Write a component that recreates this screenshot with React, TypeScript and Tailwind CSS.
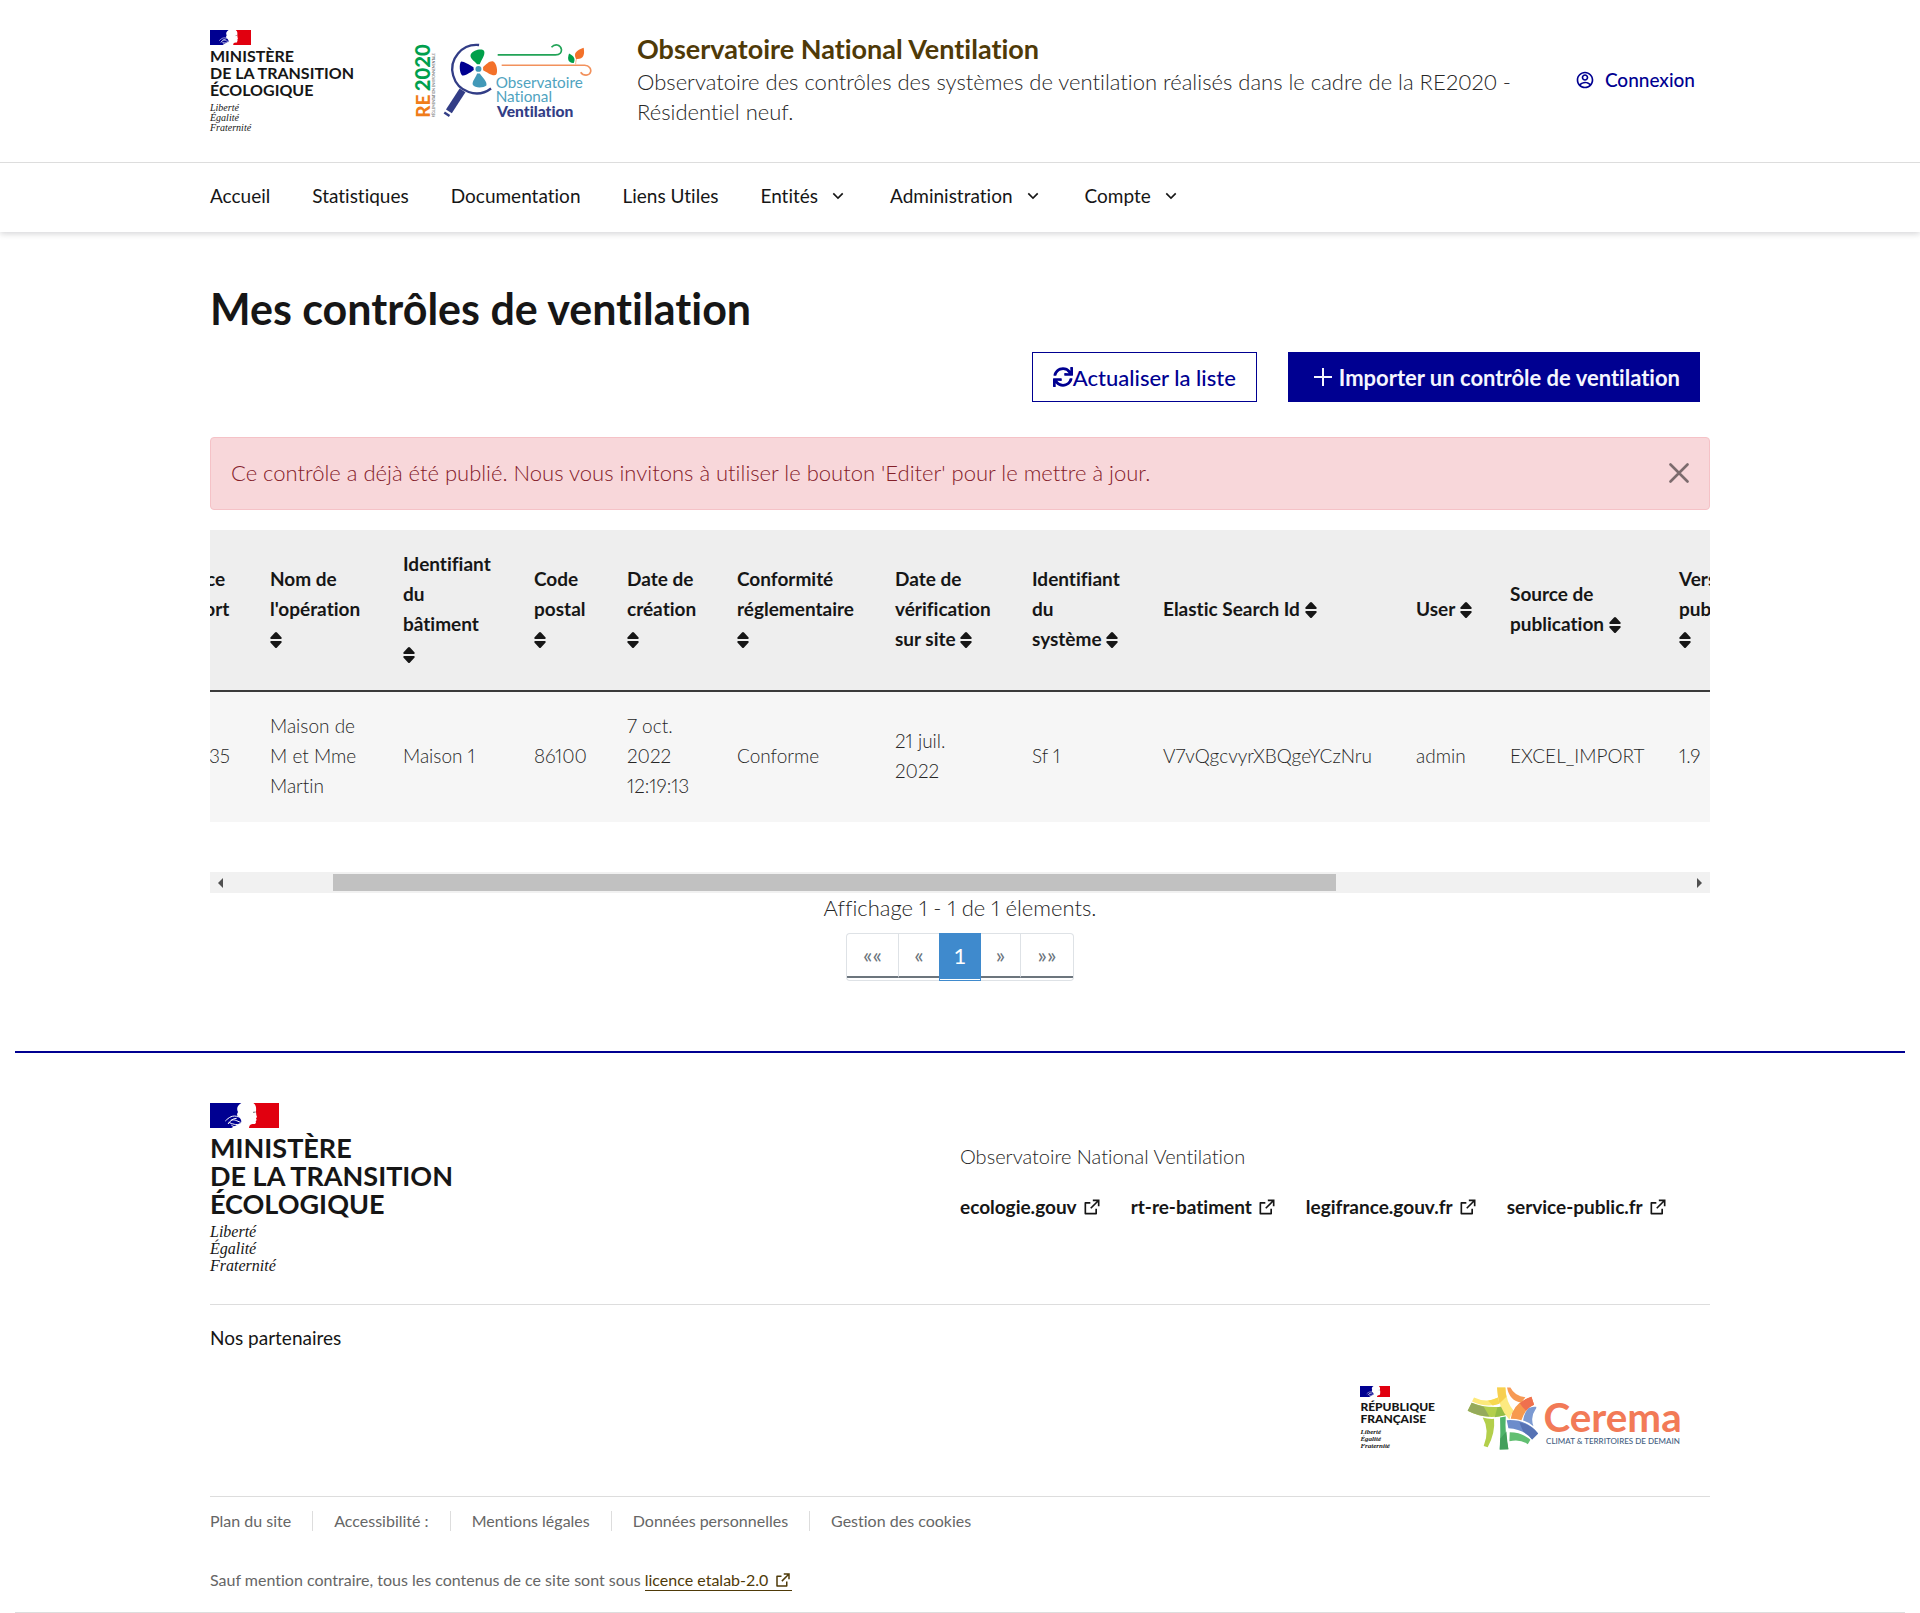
import { useLayoutEffect, useRef } from "react";
import type { ReactNode } from "react";
import { FaSync } from "react-icons/fa";
import { RiAccountCircleLine, RiArrowDownSLine, RiExternalLinkLine } from "react-icons/ri";

function Flag({ className }: { className: string }) {
  return (
    <svg viewBox="0 0 207 75" className={className} aria-hidden="true">
      <path fill="#000091" d="M0 0H94C82 7 79 17 84 27C80 33 80 38 86 42C92 47 96 53 93 60L76 68L64 75H0Z" />
      <path
        fill="none"
        stroke="#fff"
        strokeWidth="3"
        d="M86 42C68 34 56 44 46 54M80 46C66 46 60 56 54 63M62 52C74 48 80 54 92 58M92 62C78 68 66 62 56 58M90 66C80 74 70 72 64 66"
      />
      <path
        fill="#e1000f"
        d="M130 0H207V75H117C118 67 121 63 131 63C137 63 139 60 137 55L140 51L138 46L141 42C138 35 139 33 138 27C138 20 141 8 130 0Z"
      />
      <path stroke="#222" strokeWidth="2" d="M129 28L137 27" />
    </svg>
  );
}

function OnvLogo() {
  return (
    <svg viewBox="640 65 540 235" className="h-[78px] w-[180px] overflow-visible" role="img" aria-label="RE 2020 – Observatoire National Ventilation" fontFamily="Lato, sans-serif">
      <g transform="translate(690 293) rotate(-90)" fontWeight="900">
        <text fontSize="57" fill="#f07d1a">RE</text>
        <text x="80" fontSize="61" fill="#009f4d">2020</text>
      </g>
      <text transform="translate(705 292) rotate(-90)" fontSize="10" fill="#555">
        RÉGLEMENTATION ENVIRONNEMENTALE
      </text>
      <path fill="none" stroke="#323d86" strokeWidth="7" d="M838 74A73 73 0 1 0 874 205" />
      <path stroke="#323d86" strokeWidth="21" d="M788 211L747 274" />
      <path stroke="#323d86" strokeWidth="19" d="M743 280L739 286" />
      <path fill="#00a04a" d="M832 132C824 122 808 114 813 102C820 90 846 83 853 92C858 103 843 122 840 132Z" />
      <path fill="#f3712a" d="M850 140C860 132 868 122 879 123C891 126 896 156 889 164C880 170 862 156 850 150Z" />
      <path fill="#4299b8" d="M832 160C828 172 816 184 819 194C826 205 852 203 860 196C863 184 848 172 840 160Z" />
      <path fill="#000091" d="M822 149C810 158 796 166 787 166C779 160 777 130 784 124C794 124 808 134 821 141Z" />
      <circle cx="836" cy="146" r="9" fill="#4299b8" />
      <g fill="none" strokeWidth="5">
        <path stroke="#22a357" d="M894 104H1068C1082 104 1087 96 1086 87C1083 72 1066 69 1056 81" />
        <path stroke="#f2915c" d="M906 135H1156C1170 136 1176 145 1174 155C1170 168 1152 168 1144 156" />
        <path stroke="#f2915c" strokeWidth="2" d="M1129 132C1128 118 1137 105 1145 94" />
      </g>
      <path fill="#f3712a" d="M1130 116C1121 98 1131 90 1153 82C1157 103 1152 118 1130 116Z" />
      <path fill="#00a04a" d="M1109 100C1124 107 1129 117 1123 128C1106 129 1103 117 1109 100Z" />
      <text x="888" y="205" fontSize="46" fill="#4fa3c0">Observatoire</text>
      <text x="888" y="247" fontSize="46" fill="#4fa3c0">National</text>
      <text x="892" y="291" fontSize="47" fontWeight="900" fill="#323d86">Ventilation</text>
    </svg>
  );
}

function CeremaLogo() {
  return (
    <svg viewBox="380 45 650 200" className="h-[67px] w-[217px] overflow-visible" role="img" aria-label="Cerema – Climat & territoires de demain" fontFamily="Lato, sans-serif">
      <path fill="#fde97a" d="M404 82Q442 100 476 82L480 101Q440 114 398 94Z" />
      <path fill="#f8d84f" d="M446 92Q464 88 476 82L480 101L460 106Z" />
      <path fill="#b3cf4b" d="M397 98Q440 115 490 109Q498 120 503 134Q440 152 385 122Z" />
      <path fill="#95aa5b" d="M397 98Q415 106 433 110L450 139Q415 138 385 122Z" />
      <path fill="#93bd45" d="M474 111L490 109Q498 120 503 134L466 141Z" />
      <path fill="#fdea80" d="M473 52H498Q500 96 523 122Q513 134 510 148Q476 115 473 52Z" />
      <path fill="#f7cf50" d="M473 52H498Q498 66 501 80L480 100Q474 76 473 52Z" />
      <path fill="#f79a55" d="M503 52H513Q526 78 558 81L546 97Q510 92 503 52Z" />
      <path fill="#f79a4e" d="M576 80L584 104Q558 114 546 150Q530 146 514 146Q520 98 576 80Z" />
      <path fill="#f0704e" d="M576 80L584 104Q569 110 560 122Q548 110 541 99Q556 86 576 80Z" />
      <path fill="#7c9ad2" d="M567 114Q578 108 590 110Q592 112 588 118Q572 140 582 168Q568 156 551 151Q554 128 567 114Z" />
      <path fill="#6d8ccb" d="M502 150Q562 146 596 190L578 208Q552 176 507 174Z" />
      <path fill="#5672b4" d="M540 156Q576 164 596 190L578 208Q568 194 552 185Q544 168 540 156Z" />
      <path fill="#62bf72" d="M511 186Q548 186 573 209L565 222Q544 206 510 213Z" />
      <path fill="#4fb46a" d="M482 142L499 139Q496 190 507 237L481 238Q484 188 482 142Z" />
      <path fill="#43a05c" d="M483 205L501 184Q503 212 507 237L481 238Z" />
      <path fill="#b3cf4b" d="M430 142Q446 147 464 146Q468 190 445 231L433 227Q452 180 430 142Z" />
      <text x="612" y="186" fontSize="121" fontWeight="700" fill="#f27a57">Cerema</text>
      <text x="620" y="222" fontSize="24" fontWeight="500" fill="#44607f">CLIMAT &amp; TERRITOIRES DE DEMAIN</text>
    </svg>
  );
}

function SortIcon() {
  return (
    <svg viewBox="0 0 12 16" className="inline-block h-4 w-3 align-[-2px]" aria-hidden="true">
      <path fill="#161616" d="M5 .6Q6-.6 7 .6L11.6 5.6Q12 7 10.8 7H1.2Q0 7 .4 5.6ZM5 15.4Q6 16.6 7 15.4L11.6 10.4Q12 9 10.8 9H1.2Q0 9 .4 10.4Z" />
    </svg>
  );
}

const columns: { w: string; lines: string[]; inline?: boolean; value: ReactNode }[] = [
  { w: "w-[62px]", lines: [], value: null },
  { w: "w-[130px]", lines: ["Référence", "du rapport"], value: <div className="text-right">35</div> },
  { w: "w-[133px]", lines: ["Nom de", "l'opération"], value: "Maison de M et Mme Martin" },
  { w: "w-[131px]", lines: ["Identifiant", "du", "bâtiment"], value: "Maison 1" },
  { w: "w-[93px]", lines: ["Code", "postal"], value: "86100" },
  { w: "w-[110px]", lines: ["Date de", "création"], value: <>7 oct.<br />2022<br />12:19:13</> },
  { w: "w-[158px]", lines: ["Conformité", "réglementaire"], value: "Conforme" },
  { w: "w-[137px]", lines: ["Date de", "vérification", "sur site"], inline: true, value: <>21 juil.<br />2022</> },
  { w: "w-[131px]", lines: ["Identifiant", "du", "système"], inline: true, value: "Sf 1" },
  { w: "w-[253px]", lines: ["Elastic Search Id"], inline: true, value: "V7vQgcvyrXBQgeYCzNru" },
  { w: "w-[94px]", lines: ["User"], inline: true, value: "admin" },
  { w: "w-[169px]", lines: ["Source de", "publication"], inline: true, value: "EXCEL_IMPORT" },
  { w: "w-[579px]", lines: ["Version de", "publication"], value: "1.9" },
];

function ControlsTable() {
  const scroller = useRef<HTMLDivElement>(null);
  useLayoutEffect(() => {
    if (scroller.current) scroller.current.scrollLeft = 152;
  }, []);
  return (
    <div>
      <div ref={scroller} className="overflow-x-auto pb-[50px] [scrollbar-width:none]">
        <table className="w-[2180px] table-fixed border-collapse text-left text-[19px] leading-[30px] proportional-nums">
          <colgroup>
            {columns.map((c, i) => (
              <col key={i} className={c.w} />
            ))}
          </colgroup>
          <thead className="border-b-2 border-[#3a3a3a] bg-[#eeeeee] text-[#161616]">
            <tr>
              {columns.map((c, i) => (
                <th key={i} scope="col" className="px-5 pt-[19px] pb-[21px] font-bold whitespace-nowrap">
                  {c.lines.map((l, j) => (
                    <span key={l}>
                      {j > 0 && <br />}
                      {l}
                    </span>
                  ))}
                  {c.lines.length > 0 && (
                    <>
                      {c.inline ? " " : <br />}
                      <SortIcon />
                    </>
                  )}
                </th>
              ))}
            </tr>
          </thead>
          <tbody className="bg-[#f6f6f6] font-light text-[#262626]">
            <tr>
              {columns.map((c, i) => (
                <td key={i} className="px-5 pt-[19px] pb-[21px]">
                  {c.value}
                </td>
              ))}
            </tr>
          </tbody>
        </table>
      </div>
      <div className="flex h-[21px] items-center justify-between bg-[#f1f1f1] px-2" aria-hidden="true">
        <span className="border-y-[5px] border-r-[5px] border-y-transparent border-r-[#505050]" />
        <div className="mx-2 flex h-[17px] flex-1">
          <div className="w-[7%]" />
          <div className="w-[68.8%] bg-[#c1c1c1]" />
        </div>
        <span className="border-y-[5px] border-l-[5px] border-y-transparent border-l-[#505050]" />
      </div>
    </div>
  );
}

function Header() {
  return (
    <header className="shadow-[0_2px_6px_rgba(0,0,18,0.16)]">
      <div className="border-b border-[#dddddd]">
        <div className="mx-auto flex max-w-[1500px] items-start pt-[30px] pb-[29px]">
          <a href="#accueil" className="block w-[203px] text-[#161616]">
            <Flag className="h-[15px] w-[41px]" />
            <p className="mt-[2px] text-base leading-[17px] font-bold">
              MINISTÈRE<br />DE LA TRANSITION<br />ÉCOLOGIQUE
            </p>
            <p className="mt-[5px] font-['Liberation_Serif',serif] text-[10px] leading-[10px] italic">
              Liberté<br />Égalité<br />Fraternité
            </p>
          </a>
          <div className="pt-3">
            <OnvLogo />
          </div>
          <a href="#accueil" className="ml-11 block w-[900px]">
            <p className="mt-[3px] text-[27px] leading-[32px] font-bold text-[#4f3a08]">Observatoire National Ventilation</p>
            <p className="mt-[2px] text-[22px] leading-[30px] font-light text-[#262626]">
              Observatoire des contrôles des systèmes de ventilation réalisés dans le cadre de la RE2020 - Résidentiel neuf.
            </p>
          </a>
          <a href="#connexion" className="mt-[35px] ml-auto mr-[15px] flex items-center gap-2.5 text-[19px] leading-[30px] font-medium text-[#000091]">
            <RiAccountCircleLine className="size-5" />
            Connexion
          </a>
        </div>
      </div>
      <nav className="mx-auto flex h-[69px] max-w-[1500px] items-center gap-[42px] pb-[3px] text-[19px] text-[#161616]">
        <a href="#accueil">Accueil</a>
        <a href="#statistiques">Statistiques</a>
        <a href="#documentation">Documentation</a>
        <a href="#liens">Liens Utiles</a>
        {["Entités", "Administration", "Compte"].map((m) => (
          <button key={m} type="button" className="flex items-center gap-2.5">
            {m}
            <RiArrowDownSLine className="size-5" />
          </button>
        ))}
      </nav>
    </header>
  );
}

function Pagination() {
  const cell = "h-full border-r border-b-2 border-r-[#dee2e6] border-b-[#6c757d] text-[#6c757d]";
  return (
    <nav aria-label="Pagination" className="mx-auto mt-[10px] mb-px flex h-12 w-fit items-stretch text-[22px] leading-[30px]">
      <div className="flex overflow-hidden rounded-l border border-r-0 border-[#dee2e6] pb-0.5">
        <button type="button" className={`${cell} w-[52px]`}>««</button>
        <button type="button" className={`${cell} w-10 border-r-0`}>«</button>
      </div>
      <button type="button" aria-current="page" className="w-[42px] bg-[#3f8acd] p-px text-white">
        <span className="flex h-[45px] items-center justify-center border-b border-white pb-0.5">1</span>
      </button>
      <div className="flex overflow-hidden rounded-r border border-l-0 border-[#dee2e6] pb-0.5">
        <button type="button" className={`${cell} w-10`}>»</button>
        <button type="button" className={`${cell} w-[52px] border-r-0`}>»»</button>
      </div>
    </nav>
  );
}

function Footer() {
  return (
    <footer className="mx-[15px] mt-[70px] border-t-2 border-b border-t-[#000091] border-b-[#dddddd]">
      <div className="mx-auto max-w-[1500px]">
        <div className="flex items-start pt-[50px]">
          <a href="#accueil" className="block w-1/2 text-[#161616]">
            <Flag className="h-[25px] w-[69px]" />
            <p className="mt-[6px] text-[27px] leading-[28px] font-bold">
              MINISTÈRE<br />DE LA TRANSITION<br />ÉCOLOGIQUE
            </p>
            <p className="mt-[5px] font-['Liberation_Serif',serif] text-base leading-[17px] italic">
              Liberté<br />Égalité<br />Fraternité
            </p>
          </a>
          <div className="w-1/2 pt-[38px]">
            <p className="text-xl leading-[30px] font-light text-[#262626]">Observatoire National Ventilation</p>
            <ul className="mt-[21px] flex gap-[29px] text-[19px] leading-[30px] font-bold text-[#161616]">
              {["ecologie.gouv", "rt-re-batiment", "legifrance.gouv.fr", "service-public.fr"].map((l) => (
                <li key={l}>
                  <a href={`#${l}`} className="flex items-center gap-[5px]">
                    {l}
                    <RiExternalLinkLine className="size-5" />
                  </a>
                </li>
              ))}
            </ul>
          </div>
        </div>
        <div className="mt-[30px] border-t border-[#dddddd] pt-[18px]">
          <h2 className="text-[19px] leading-[30px] text-[#161616]">Nos partenaires</h2>
          <div className="mt-8 flex items-start justify-end pr-[27px]">
            <a href="#republique" className="mr-[31px] block text-[#161616]">
              <Flag className="mt-px h-[11px] w-[30px]" />
              <p className="mt-1 text-xs leading-[12px] font-black">
                RÉPUBLIQUE<br />FRANÇAISE
              </p>
              <p className="mt-1 font-['Liberation_Serif',serif] text-[7px] leading-[7px] font-bold italic">
                Liberté<br />Égalité<br />Fraternité
              </p>
            </a>
            <a href="#cerema">
              <CeremaLogo />
            </a>
          </div>
        </div>
        <div className="mt-11 border-t border-[#dddddd] pt-[14px] pb-5 text-base text-[#666666]">
          <ul className="flex leading-5">
            {["Plan du site", "Accessibilité :", "Mentions légales", "Données personnelles", "Gestion des cookies"].map((l, i) => (
              <li key={l} className={i ? "ml-[21px] border-l border-[#dddddd] pl-[21px]" : ""}>
                <a href={`#lien-${i}`}>{l}</a>
              </li>
            ))}
          </ul>
          <p className="mt-[36px] leading-[25px]">
            Sauf mention contraire, tous les contenus de ce site sont sous{" "}
            <a href="#licence" className="inline-flex items-center gap-1.5 border-b border-[#4f3a08] leading-5 text-[#4f3a08]">
              licence etalab-2.0
              <RiExternalLinkLine className="size-[18px]" />
            </a>
          </p>
        </div>
      </div>
    </footer>
  );
}

export default function App() {
  return (
    <div className="bg-white font-[Lato,sans-serif] text-[#262626] [font-variant-ligatures:none]">
      <Header />
      <main className="mx-auto max-w-[1500px]">
        <h1 className="pt-[52px] text-[43px] leading-[50px] font-bold text-[#161616]">Mes contrôles de ventilation</h1>
        <div className="mt-[18px] flex justify-end gap-[31px] pr-2.5 text-[22px]">
          <button type="button" className="flex h-[50px] items-center border border-[#000091] px-5 font-medium text-[#000091]">
            <FaSync className="size-5" />
            Actualiser la liste
          </button>
          <button type="button" className="flex h-[50px] items-center gap-1.5 bg-[#000091] pr-5 pl-[25px] font-bold text-[#f5f5fe]">
            <svg viewBox="0 0 20 20" className="size-5" aria-hidden="true">
              <path stroke="#f5f5fe" strokeWidth="2" d="M10 1V19M1 10H19" />
            </svg>
            Importer un contrôle de ventilation
          </button>
        </div>
        <div role="alert" className="mt-[35px] mb-5 flex items-center justify-between rounded border border-[#f5c2c7] bg-[#f8d7da] px-5 pt-5 pb-[21px] text-[22px] leading-[30px] font-light text-[#842029]">
          <p>Ce contrôle a déjà été publié. Nous vous invitons à utiliser le bouton 'Editer' pour le mettre à jour.</p>
          <button type="button" aria-label="Fermer">
            <svg viewBox="0 0 20 20" className="size-5" aria-hidden="true">
              <path stroke="#7c6b6d" strokeWidth="2.6" strokeLinecap="round" d="M1.5 1.5L18.5 18.5M18.5 1.5L1.5 18.5" />
            </svg>
          </button>
        </div>
        <ControlsTable />
        <p className="text-center text-[22px] leading-[30px] font-light proportional-nums">Affichage 1 - 1 de 1 élements.</p>
        <Pagination />
      </main>
      <Footer />
    </div>
  );
}
